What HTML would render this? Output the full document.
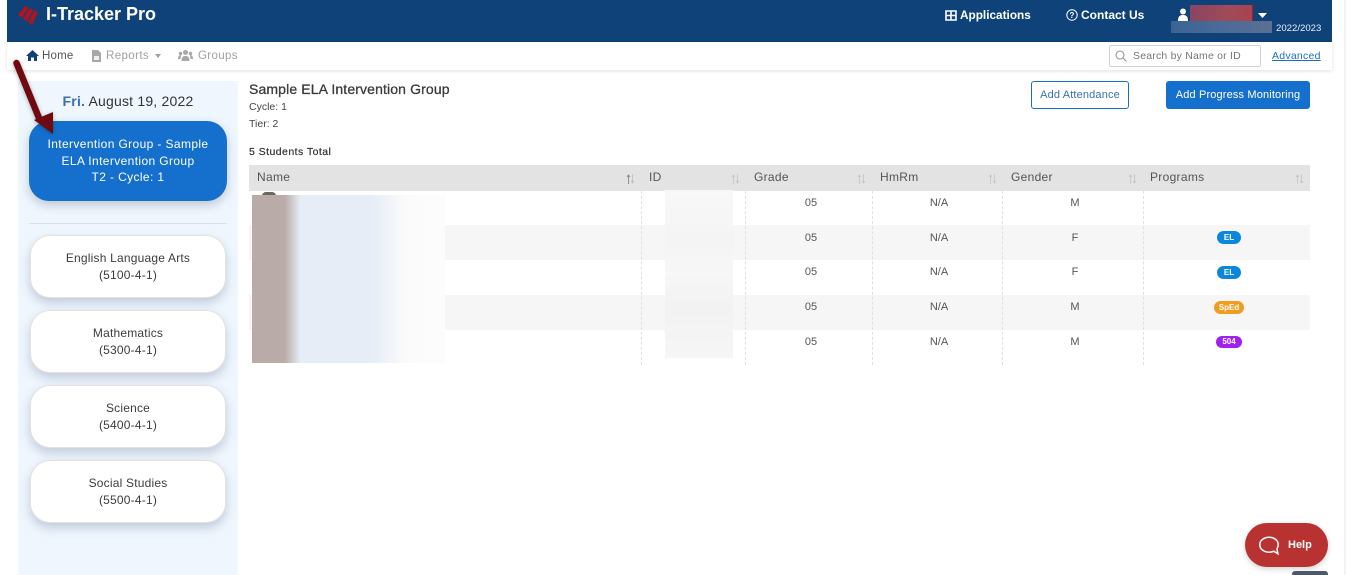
<!DOCTYPE html>
<html><head><meta charset="utf-8"><title>I-Tracker Pro</title>
<style>
html,body{margin:0;padding:0;width:1346px;height:575px;overflow:hidden;background:#fff;font-family:"Liberation Sans",sans-serif;color:#333}
.a{position:absolute;white-space:nowrap}
.card{position:absolute;left:30px;width:194px;height:61px;background:#fff;border:1px solid #e2e2e2;border-radius:20px;box-shadow:0 5px 10px rgba(60,80,110,.25);text-align:center;font-size:12px;line-height:17px;color:#3c3c3c;letter-spacing:.2px}
.card div{margin-top:14px}
.th{position:absolute;top:170px;font-size:12px;color:#555;letter-spacing:.3px}
.c{position:absolute;font-size:11px;color:#555;width:60px;text-align:center}
.dash{position:absolute;top:191px;height:174px;width:0;border-left:1px dashed #e0e0e0}
.row{position:absolute;left:249px;width:1061px;height:35px;background:#f6f6f6}
.bdg{position:absolute;height:13px;border-radius:7px;color:#fff;font-size:8px;font-weight:bold;line-height:13px;text-align:center}
.so{position:absolute;top:174px}
</style></head><body>
<div class="a" style="left:1344px;top:0;width:2px;height:575px;background:#f3f3f3"></div>
<div class="a" style="left:7px;top:0;width:1325px;height:42px;background:#0e4278"></div>
<div class="a" style="left:7px;top:42px;width:1325px;height:28px;background:#fff;box-shadow:0 1px 4px rgba(0,0,0,.13)"></div>

<svg class="a" style="left:18px;top:5px" width="21" height="21" viewBox="0 0 21 21"><g fill="#b01420"><path d="M7 1L0 10l3.900 2.800 6.700-10.100z"/><path d="M11.700 3.200L5 13.600l4 2.800 6.300-11.600z"/><path d="M16.400 5.300L10.100 17.200 14 20 20 7z"/></g></svg>
<div class="a" style="left:46px;top:4px;font-size:18px;font-weight:bold;color:#fff">I-Tracker Pro</div>

<svg class="a" style="left:945px;top:10px" width="12" height="11" viewBox="0 0 12 11"><path fill="none" stroke="#fff" stroke-width="1.600" d="M1 1h10v9H1zM1 5.500h10M6 1v9"/></svg>
<div class="a" style="left:960px;top:8px;font-size:11.800px;font-weight:bold;color:#fff">Applications</div>
<svg class="a" style="left:1066px;top:9px" width="12" height="12" viewBox="0 0 12 12"><circle cx="6" cy="6" r="5.200" fill="none" stroke="#fff" stroke-width="1"/><text x="6" y="9" font-size="8" font-weight="bold" fill="#fff" text-anchor="middle" font-family="Liberation Sans">?</text></svg>
<div class="a" style="left:1081px;top:8px;font-size:12px;font-weight:bold;color:#fff">Contact Us</div>
<svg class="a" style="left:1177px;top:8px" width="12" height="13" viewBox="0 0 12 13"><circle cx="6" cy="3.500" r="3" fill="#fff"/><path fill="#fff" d="M1 13c0-5 2-6 5-6s5 1 5 6z"/></svg>
<div class="a" style="left:1190px;top:5px;width:62px;height:17px;background:linear-gradient(90deg,#8a4560,#a04a58 60%,#a8434f);border-right:1px solid #c01020"></div>
<div class="a" style="left:1171px;top:21px;width:101px;height:12px;background:linear-gradient(90deg,#3a6494,#4a6b98 50%,#5c6f92)"></div>
<svg class="a" style="left:1258px;top:13px" width="9" height="5" viewBox="0 0 9 5"><path fill="#fff" d="M0 0h9L4.500 5z"/></svg>
<div class="a" style="left:1276px;top:23px;font-size:9.600px;color:#e8eef5">2022/2023</div>

<svg class="a" style="left:26px;top:50px" width="13" height="11" viewBox="0 0 13 11"><path fill="#0e4278" d="M6.500 0L13 6h-2v5H8V7.500H5V11H2V6H0z"/></svg>
<div class="a" style="left:42px;top:50px;font-size:11.500px;color:#555;letter-spacing:.2px">Home</div>
<svg class="a" style="left:92px;top:50px" width="9" height="12" viewBox="0 0 9 12"><path fill="#a8a8a8" d="M0 0h6l3 3v9H0z"/><path fill="#eee" d="M2 6h5v4H2z"/></svg>
<div class="a" style="left:106px;top:50px;font-size:11.500px;color:#a0a0a0;letter-spacing:.4px">Reports</div>
<svg class="a" style="left:155px;top:54px" width="6" height="4" viewBox="0 0 6 4"><path fill="#a0a0a0" d="M0 0h6L3 4z"/></svg>
<svg class="a" style="left:178px;top:50px" width="15" height="11" viewBox="0 0 15 11"><g fill="#a8a8a8"><circle cx="7.500" cy="2.500" r="2.500"/><circle cx="2.500" cy="3.500" r="1.700"/><circle cx="12.500" cy="3.500" r="1.700"/><path d="M3.500 11c0-4 1.500-5 4-5s4 1 4 5z"/><path d="M0 9c0-3 1-4 3-4l-.5 4zM15 9c0-3-1-4-3-4l.5 4z"/></g></svg>
<div class="a" style="left:198px;top:50px;font-size:11.500px;color:#a0a0a0;letter-spacing:.35px">Groups</div>

<div class="a" style="left:1109px;top:45px;width:150px;height:20px;border:1px solid #d0d4da;border-radius:2px"></div>
<svg class="a" style="left:1115px;top:50px" width="12" height="12" viewBox="0 0 12 12"><circle cx="5" cy="5" r="4" fill="none" stroke="#999" stroke-width="1.100"/><path stroke="#999" stroke-width="1.200" d="M8 8l3.500 3.500"/></svg>
<div class="a" style="left:1133px;top:50px;font-size:10.500px;color:#777;letter-spacing:.2px">Search by Name or ID</div>
<div class="a" style="left:1272px;top:50px;font-size:10.500px;color:#1a6fc4;text-decoration:underline;letter-spacing:.25px">Advanced</div>

<div class="a" style="left:18px;top:81px;width:220px;height:494px;background:#eff6fe"></div>
<div class="a" style="left:18px;top:93px;width:220px;text-align:center;font-size:14px;color:#333;letter-spacing:.2px"><b style="color:#3a6fb8">Fri.</b> August 19, 2022</div>
<div class="a" style="left:29px;top:121px;width:198px;height:80px;background:#1570cd;border-radius:20px;box-shadow:0 4px 10px rgba(60,80,110,.28);color:#fff;text-align:center;font-size:12px;line-height:16.500px;letter-spacing:.38px"><div style="margin-top:15px">Intervention Group - Sample<br>ELA Intervention Group<br>T2 - Cycle: 1</div></div>
<div class="a" style="left:29px;top:223px;width:198px;height:1px;background:#d8dfe8"></div>
<div class="card" style="top:235px"><div>English Language Arts<br>(5100-4-1)</div></div>
<div class="card" style="top:310px"><div>Mathematics<br>(5300-4-1)</div></div>
<div class="card" style="top:385px"><div>Science<br>(5400-4-1)</div></div>
<div class="card" style="top:460px"><div>Social Studies<br>(5500-4-1)</div></div>

<svg class="a" style="left:10px;top:55px;overflow:visible;filter:drop-shadow(0 1px 2px rgba(0,0,0,.3))" width="50" height="85" viewBox="0 0 50 85"><path d="M6.500 8L29 63" stroke="#6f0a10" stroke-width="6.500" stroke-linecap="round" fill="none"/><path d="M24 65L43 57 43 79z" fill="#6f0a10"/></svg>

<div class="a" style="left:249px;top:81px;font-size:14px;color:#3a3a3a;-webkit-text-stroke:.3px #3a3a3a;letter-spacing:.13px">Sample ELA Intervention Group</div>
<div class="a" style="left:249px;top:101px;font-size:10.500px;color:#444">Cycle: 1</div>
<div class="a" style="left:249px;top:118px;font-size:10.500px;color:#444">Tier: 2</div>
<div class="a" style="left:249px;top:146px;font-size:10.500px;color:#333;-webkit-text-stroke:.2px #333;letter-spacing:.45px">5 Students Total</div>

<div class="a" style="left:1031px;top:81px;width:96px;height:26px;border:1px solid #1570cd;border-radius:3px;text-align:center;font-size:11px;line-height:27px;color:#3b6fb5;letter-spacing:.15px">Add Attendance</div>
<div class="a" style="left:1166px;top:81px;width:144px;height:28px;background:#1570cd;border-radius:3px;text-align:center;font-size:11px;line-height:29px;color:#fff;letter-spacing:.15px">Add Progress Monitoring</div>

<div class="a" style="left:249px;top:165px;width:1061px;height:26px;background:#e3e3e3"></div>
<div class="row" style="top:225px"></div>
<div class="row" style="top:295px"></div>
<div class="th" style="left:257px">Name</div>
<div class="th" style="left:649px">ID</div>
<div class="th" style="left:754px">Grade</div>
<div class="th" style="left:880px">HmRm</div>
<div class="th" style="left:1011px">Gender</div>
<div class="th" style="left:1150px">Programs</div>
<svg class="so" style="left:626px" width="9" height="10" viewBox="0 0 9 10"><path stroke="#889" fill="none" d="M2.500 10V1M1 3l1.500-2L4 3" stroke-width=".9"/><path stroke="#bbb" fill="none" d="M6.500 0v9M5 7l1.500 2L8 7" stroke-width=".8"/></svg>
<svg class="so" style="left:731px" width="9" height="10" viewBox="0 0 9 10"><path stroke="#c4c4c4" fill="none" d="M2.500 10V1M1 3l1.500-2L4 3M6.500 0v9M5 7l1.500 2L8 7" stroke-width=".8"/></svg>
<svg class="so" style="left:857px" width="9" height="10" viewBox="0 0 9 10"><path stroke="#c4c4c4" fill="none" d="M2.500 10V1M1 3l1.500-2L4 3M6.500 0v9M5 7l1.500 2L8 7" stroke-width=".8"/></svg>
<svg class="so" style="left:988px" width="9" height="10" viewBox="0 0 9 10"><path stroke="#c4c4c4" fill="none" d="M2.500 10V1M1 3l1.500-2L4 3M6.500 0v9M5 7l1.500 2L8 7" stroke-width=".8"/></svg>
<svg class="so" style="left:1128px" width="9" height="10" viewBox="0 0 9 10"><path stroke="#c4c4c4" fill="none" d="M2.500 10V1M1 3l1.500-2L4 3M6.500 0v9M5 7l1.500 2L8 7" stroke-width=".8"/></svg>
<svg class="so" style="left:1295px" width="9" height="10" viewBox="0 0 9 10"><path stroke="#c4c4c4" fill="none" d="M2.500 10V1M1 3l1.500-2L4 3M6.500 0v9M5 7l1.500 2L8 7" stroke-width=".8"/></svg>

<div class="dash" style="left:641px"></div>
<div class="dash" style="left:745px"></div>
<div class="dash" style="left:872px"></div>
<div class="dash" style="left:1002px"></div>
<div class="dash" style="left:1143px"></div>

<div class="a" style="left:262px;top:192px;width:14px;height:4px;background:#6f6660;border-radius:7px 7px 0 0"></div>
<div class="a" style="left:252px;top:195px;width:193px;height:168px;background:linear-gradient(90deg,#b9aca8 0,#b9aca8 17%,#e6edf6 25%,#e6edf6 62%,#fbfbfb 80%,#fcfcfc 100%)"></div>
<div class="a" style="left:665px;top:190px;width:68px;height:168px;background:linear-gradient(180deg,#f8f8f8,#f4f4f4 30%,#f7f7f7 50%,#f2f2f2 70%,#f6f6f6)"></div>

<div class="c" style="left:781px;top:197px">05</div><div class="c" style="left:909px;top:197px">N/A</div><div class="c" style="left:1045px;top:197px">M</div>
<div class="c" style="left:781px;top:232px">05</div><div class="c" style="left:909px;top:232px">N/A</div><div class="c" style="left:1045px;top:232px">F</div>
<div class="c" style="left:781px;top:266px">05</div><div class="c" style="left:909px;top:266px">N/A</div><div class="c" style="left:1045px;top:266px">F</div>
<div class="c" style="left:781px;top:301px">05</div><div class="c" style="left:909px;top:301px">N/A</div><div class="c" style="left:1045px;top:301px">M</div>
<div class="c" style="left:781px;top:336px">05</div><div class="c" style="left:909px;top:336px">N/A</div><div class="c" style="left:1045px;top:336px">M</div>

<div class="bdg" style="left:1217px;top:231px;width:24px;background:#0a87dc">EL</div>
<div class="bdg" style="left:1217px;top:266px;width:24px;background:#0a87dc">EL</div>
<div class="bdg" style="left:1214px;top:301px;width:30px;background:#f09c1f">SpEd</div>
<div class="bdg" style="left:1216px;top:336px;width:26px;height:12px;line-height:12px;background:#a020f0">504</div>

<div class="a" style="left:1245px;top:523px;width:83px;height:44px;background:#b93232;border-radius:22px;box-shadow:0 2px 6px rgba(0,0,0,.18)"></div>
<svg class="a" style="left:1258px;top:536px" width="22" height="20" viewBox="0 0 22 20"><path fill="none" stroke="#fff" stroke-width="1.500" d="M11 1.200c5 0 9.200 3 9.200 7.500 0 1.700-.5 3.100-1.300 4.300l1.100 4.800-4.300-2.600c-1.300.6-3 1-4.700 1-5 0-9.200-3.200-9.200-7.500S6 1.200 11 1.200z"/></svg>
<div class="a" style="left:1288px;top:538px;font-size:11px;font-weight:bold;color:#fff;line-height:14px">Help</div>
<div class="a" style="left:1292px;top:571px;width:36px;height:4px;background:#4a5a68;border-radius:3px 3px 0 0"></div>
</body></html>
